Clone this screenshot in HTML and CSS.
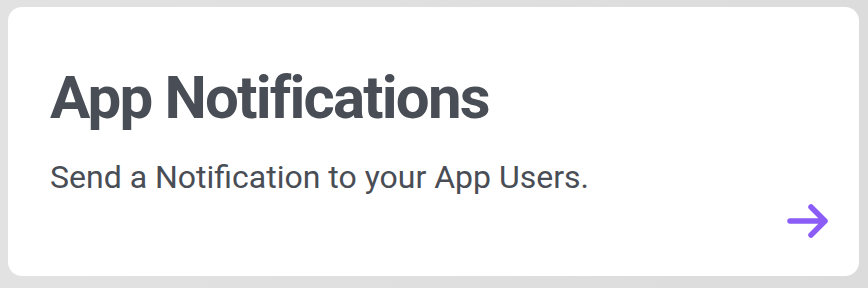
FILE: index.html
```html
<!DOCTYPE html>
<html lang="en">
<head>
    <meta charset="UTF-8">
    <meta name="viewport" content="width=device-width, initial-scale=1.0">
    <title>App Notifications</title>
    <link rel="stylesheet" href="styles.css">
</head>
<body>
    <div class="card">
        <h1 class="title">App Notifications</h1>
        <p class="subtitle">Send a Notification to your App Users.</p>
        <div class="footer">
            <svg class="arrow" viewBox="0 0 48 48" width="48" height="48">
                <path d="M7 24H42M28 10L42 24L28 38" fill="none" stroke="currentColor" stroke-width="5.5" stroke-linecap="round" stroke-linejoin="round"/>
            </svg>
        </div>
    </div>
</body>
</html>
```

FILE: styles.css
```css
html, body {
    margin: 0;
    padding: 0;
}

body {
    font-family: Roboto, "Liberation Sans", sans-serif;
    background: linear-gradient(to right, #e2e2e2, #dcdcdc);
    padding: 7px 9px 12px 8px;
    height: 288px;
    box-sizing: border-box;
}

.card {
    background: #fff;
    border-radius: 14px;
    height: 100%;
    box-sizing: border-box;
    padding: 61px 28px 31px 42px;
    display: flex;
    flex-direction: column;
}

.title {
    margin: 0;
    font-size: 60px;
    font-weight: 700;
    line-height: 1;
    letter-spacing: -1.8px;
    color: #494d55;
}

.subtitle {
    margin: 30px 0 0;
    font-size: 32px;
    line-height: 1.2;
    color: #494d55;
}

.footer {
    margin-top: auto;
    display: flex;
    justify-content: flex-end;
}

.arrow {
    color: #8b5cf6;
}
```
